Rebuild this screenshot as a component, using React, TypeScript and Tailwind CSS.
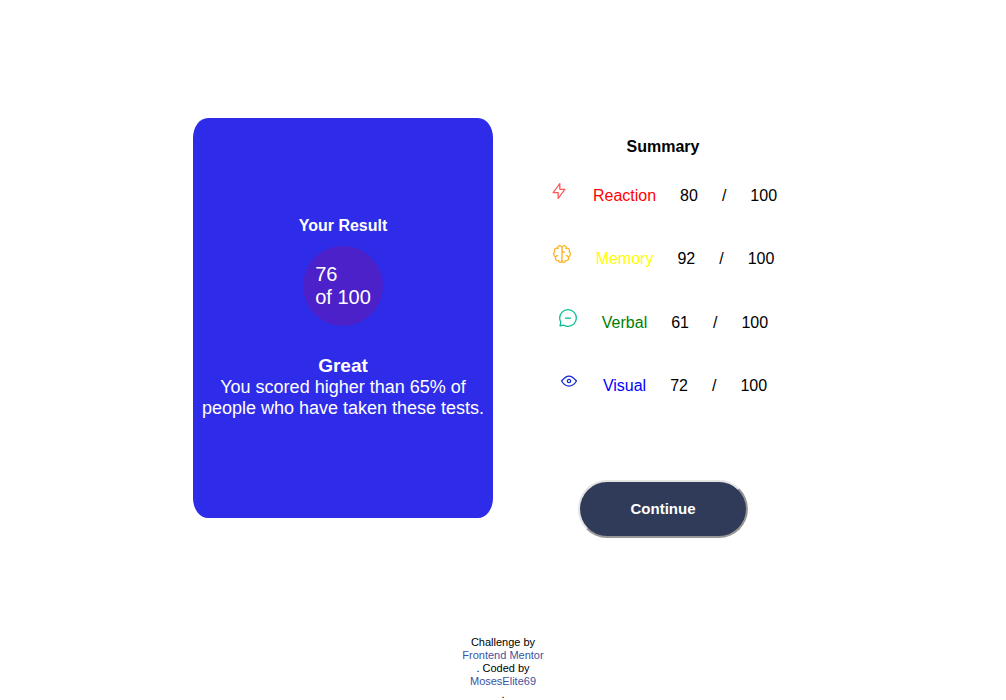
import type { ReactNode } from 'react';

type Score = {
  label: string;
  value: number;
  color: string;
  stroke: string;
  icon: ReactNode;
};

const scores: Score[] = [
  {
    label: 'Reaction',
    value: 80,
    color: 'text-[#ff0000]',
    stroke: '#FF5555',
    icon: <path d="M10.833 8.333V2.5l-6.666 9.167h5V17.5l6.666-9.167h-5Z" />,
  },
  {
    label: 'Memory',
    value: 92,
    color: 'text-[#ffff00]',
    stroke: '#FFB21E',
    icon: (
      <>
        <path d="M5.833 11.667a2.5 2.5 0 1 0 .834 4.858" />
        <path d="M3.553 13.004a3.333 3.333 0 0 1-.728-5.53m.025-.067a2.083 2.083 0 0 1 2.983-2.824m.199.054A2.083 2.083 0 1 1 10 3.75v12.917a1.667 1.667 0 0 1-3.333 0M10 5.833a2.5 2.5 0 0 0 2.5 2.5m1.667 3.334a2.5 2.5 0 1 1-.834 4.858" />
        <path d="M16.447 13.004a3.334 3.334 0 0 0 .728-5.53m-.025-.067a2.083 2.083 0 0 0-2.983-2.824M10 3.75a2.085 2.085 0 0 1 2.538-2.033 2.084 2.084 0 0 1 1.43 2.92m-.635 12.03a1.667 1.667 0 0 1-3.333 0" />
      </>
    ),
  },
  {
    label: 'Verbal',
    value: 61,
    color: 'text-[#008000]',
    stroke: '#00BB8F',
    icon: (
      <path d="M7.5 10h5M10 18.333A8.333 8.333 0 1 0 1.667 10c0 1.518.406 2.942 1.115 4.167l-.699 3.75 3.75-.699A8.295 8.295 0 0 0 10 18.333Z" />
    ),
  },
  {
    label: 'Visual',
    value: 72,
    color: 'text-[#0000ff]',
    stroke: '#1125D6',
    icon: (
      <>
        <path d="M10 11.667a1.667 1.667 0 1 0 0-3.334 1.667 1.667 0 0 0 0 3.334Z" />
        <path d="M17.5 10c-1.574 2.492-4.402 5-7.5 5s-5.926-2.508-7.5-5C4.416 7.632 6.66 5 10 5s5.584 2.632 7.5 5Z" />
      </>
    ),
  },
];

function ScoreRow({ score }: { score: Score }) {
  return (
    <li className="flex items-start justify-center gap-6">
      <svg
        className="size-5 shrink-0"
        viewBox="0 0 20 20"
        fill="none"
        stroke={score.stroke}
        strokeWidth="1.25"
        strokeLinecap="round"
        strokeLinejoin="round"
        aria-hidden="true"
      >
        {score.icon}
      </svg>
      <span className={`pt-1.5 ${score.color}`}>{score.label}</span>
      <span className="pt-1.5">{score.value}</span>
      <span className="pt-1.5">/</span>
      <span className="pt-1.5">100</span>
    </li>
  );
}

export default function App() {
  return (
    <div className="flex min-h-screen flex-col bg-white font-['Liberation_Sans',Arial,sans-serif] text-base leading-[18px] text-black">
      <main className="flex flex-wrap items-start justify-center gap-5 pt-[118px]">
        <section className="flex min-h-[400px] w-[300px] flex-col items-center rounded-[5%] bg-[#2f2ce9] pt-[99px] text-center text-white">
          <h1 className="font-bold">Your Result</h1>
          <div className="mt-[11px] flex size-20 items-center justify-center rounded-full bg-[#4d21c9] text-left text-xl leading-[23px]">
            <p>
              76
              <br />
              of 100
            </p>
          </div>
          <h2 className="mt-[29px] text-[19px] leading-[22px] font-bold">Great</h2>
          <p className="px-2 text-lg leading-[21px]">
            You scored higher than 65% of people who have taken these tests.
          </p>
        </section>

        <section className="flex w-[300px] flex-col items-center pt-5">
          <h2 className="font-bold">Summary</h2>
          <ul className="mt-[25px] flex min-h-[214px] w-full flex-col justify-between">
            {scores.map((score) => (
              <ScoreRow key={score.label} score={score} />
            ))}
          </ul>
          <button
            type="button"
            className="mt-[85px] h-[58px] w-[170px] cursor-pointer rounded-[30px] border-2 border-t-[#e3e3e3] border-r-[#979797] border-b-[#979797] border-l-[#e3e3e3] bg-[#303b59] text-[15px] font-bold text-white"
          >
            Continue
          </button>
        </section>
      </main>

      <footer className="-mb-px mt-auto flex flex-col items-center text-center text-[11px] leading-[13px]">
        <span>Challenge by</span>
        <a href="https://www.frontendmentor.io" className="text-[#3e52a3]">
          Frontend Mentor
        </a>
        <span>. Coded by</span>
        <a href="#" className="text-[#3e52a3]">
          MosesElite69
        </a>
        <span>.</span>
      </footer>
    </div>
  );
}
